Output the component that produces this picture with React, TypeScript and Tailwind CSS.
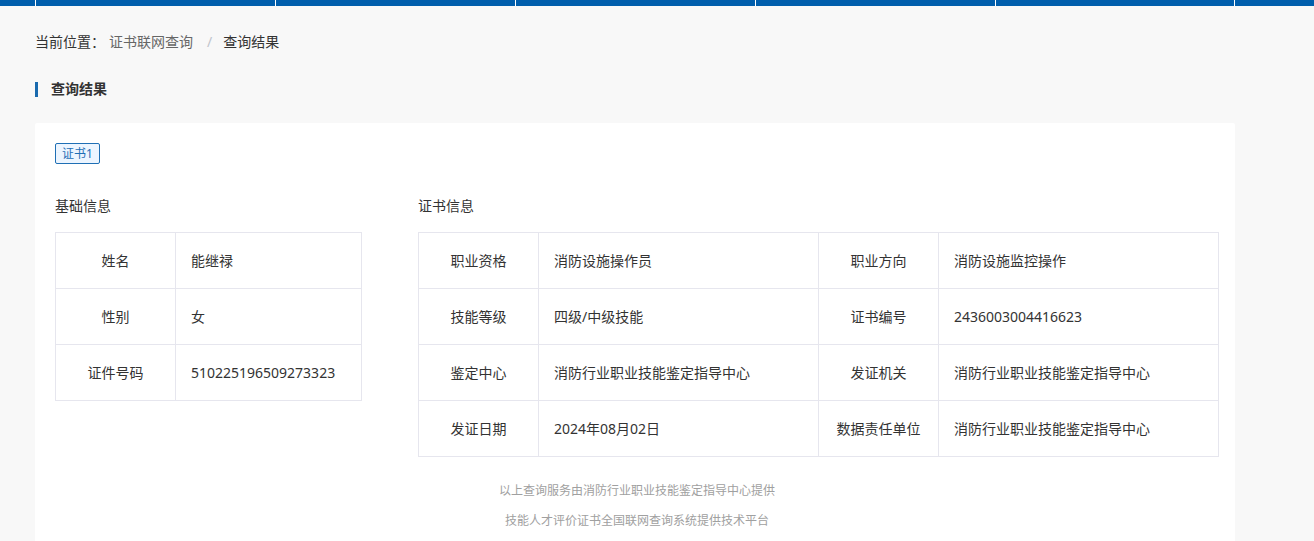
import React from "react";

const basicRows: [string, string][] = [
  ["姓名", "能继禄"],
  ["性别", "女"],
  ["证件号码", "510225196509273323"],
];

const certRows: [string, string, string, string][] = [
  ["职业资格", "消防设施操作员", "职业方向", "消防设施监控操作"],
  ["技能等级", "四级/中级技能", "证书编号", "2436003004416623"],
  ["鉴定中心", "消防行业职业技能鉴定指导中心", "发证机关", "消防行业职业技能鉴定指导中心"],
  ["发证日期", "2024年08月02日", "数据责任单位", "消防行业职业技能鉴定指导中心"],
];

const labelCell = "h-[56px] border border-[#e6e6ee] text-center text-[14px] text-[#333]";
const valueCell = "h-[56px] border border-[#e6e6ee] pl-[15px] text-left text-[14px] text-[#333]";

export default function App() {
  return (
    <div
      className="min-h-[541px] bg-[#f8f8f8]"
      style={{ fontFamily: '"Noto Sans", "Noto Sans CJK SC", sans-serif' }}
    >
      {/* Top nav strip */}
      <div className="flex h-[6px] bg-[#005eac] pl-[35px]">
        {[0, 1, 2, 3, 4].map((i) => (
          <div key={i} className="h-full w-[240px] border-l border-white last:border-r" />
        ))}
      </div>

      <div className="ml-[35px] w-[1200px]">
        {/* Breadcrumb */}
        <div className="mt-[26px] flex items-center text-[14px] leading-[20px]">
          <span className="text-[#333]">当前位置：</span>
          <span className="ml-[4px] text-[#666]">证书联网查询</span>
          <span className="ml-[14px] mr-[11px] text-[#c0c4cc]">/</span>
          <span className="text-[#333]">查询结果</span>
        </div>

        {/* Section title */}
        <div className="mt-[27px] flex items-center">
          <div className="h-[15px] w-[3px] bg-[#1a6aae]" />
          <h2 className="ml-[13px] text-[14px] font-bold leading-[20px] text-[#333]">查询结果</h2>
        </div>

        {/* Result card */}
        <div className="mt-[24px] rounded-[2px] bg-white pb-[20px] pl-[20px] pr-[16px] pt-[20px]">
          <div className="flex">
            <span className="flex h-[21px] items-center rounded-[2px] border border-[#1f6fb5] bg-[#ecf5ff] px-[6px] text-[12px] text-[#1f6fb5]">
              证书1
            </span>
          </div>

          <div className="mt-[32px] flex gap-[56px]">
            <div className="w-[307px]">
              <div className="text-[14px] leading-[20px] text-[#333]">基础信息</div>
              <table className="mt-[16px] w-full border-collapse">
                <colgroup>
                  <col className="w-[120px]" />
                  <col />
                </colgroup>
                <tbody>
                  {basicRows.map(([k, v]) => (
                    <tr key={k}>
                      <td className={labelCell}>{k}</td>
                      <td className={valueCell}>{v}</td>
                    </tr>
                  ))}
                </tbody>
              </table>
            </div>

            <div className="w-[801px]">
              <div className="text-[14px] leading-[20px] text-[#333]">证书信息</div>
              <table className="mt-[16px] w-full border-collapse">
                <colgroup>
                  <col className="w-[120px]" />
                  <col className="w-[280px]" />
                  <col className="w-[120px]" />
                  <col />
                </colgroup>
                <tbody>
                  {certRows.map(([k1, v1, k2, v2]) => (
                    <tr key={k1}>
                      <td className={labelCell}>{k1}</td>
                      <td className={valueCell}>{v1}</td>
                      <td className={labelCell}>{k2}</td>
                      <td className={valueCell}>{v2}</td>
                    </tr>
                  ))}
                </tbody>
              </table>
            </div>
          </div>

          {/* Footer notes */}
          <div className="mt-[19px] text-center text-[12px] leading-[30px] text-[#a0a0a0]">
            <p>以上查询服务由消防行业职业技能鉴定指导中心提供</p>
            <p>技能人才评价证书全国联网查询系统提供技术平台</p>
          </div>
        </div>
      </div>
    </div>
  );
}
